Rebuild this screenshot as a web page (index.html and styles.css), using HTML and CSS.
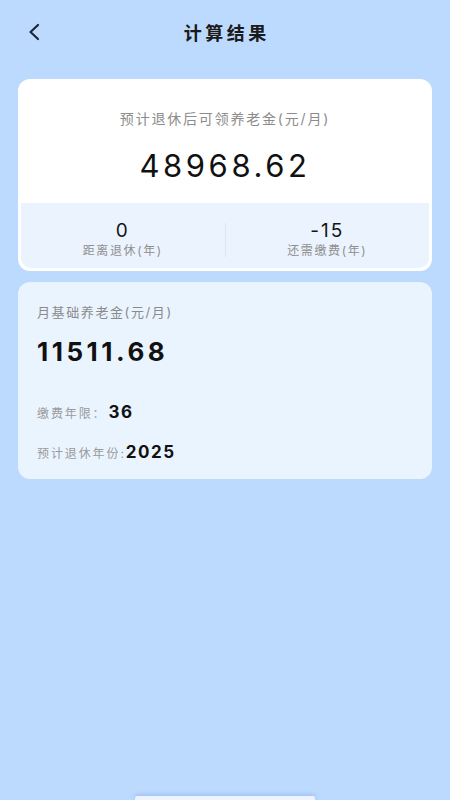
FILE: index.html
```html
<!DOCTYPE html>
<html lang="zh-CN">
<head>
    <meta charset="UTF-8">
    <meta name="viewport" content="width=device-width, initial-scale=1.0">
    <title>计算结果</title>
    <link rel="stylesheet" href="styles.css">
</head>
<body>
    <div class="page">
        <div class="header">
            <button class="back" aria-label="返回">
                <svg width="14" height="18" viewBox="0 0 14 18">
                    <polyline points="11,2 3.5,9 11,16" fill="none" stroke="#1d2633" stroke-width="2.2" stroke-linecap="round" stroke-linejoin="round"/>
                </svg>
            </button>
            <h1>计算结果</h1>
        </div>

        <div class="card total-card">
            <p class="total-label">预计退休后可领养老金(元/月)</p>
            <p class="total-value">48968.62</p>
            <div class="stats">
                <div class="stat">
                    <span class="stat-value">0</span>
                    <span class="stat-label">距离退休(年)</span>
                </div>
                <div class="stat-divider"></div>
                <div class="stat">
                    <span class="stat-value">-15</span>
                    <span class="stat-label">还需缴费(年)</span>
                </div>
            </div>
        </div>

        <div class="card base-card">
            <p class="base-label">月基础养老金(元/月)</p>
            <p class="base-value">11511.68</p>
            <div class="info-row first">
                <span class="info-label">缴费年限：</span>
                <span class="info-value years">36</span>
            </div>
            <div class="info-row">
                <span class="info-label">预计退休年份:</span>
                <span class="info-value">2025</span>
            </div>
        </div>
    </div>
    <div class="home-bar"></div>
</body>
</html>
```

FILE: styles.css
```css
* {
    margin: 0;
    padding: 0;
    box-sizing: border-box;
    font-family: 'Inter', 'Noto Sans CJK SC', sans-serif;
}

body {
    min-height: 100vh;
    background: #bcd9fe;
    color: #141414;
}

.page {
    padding: 0 18px;
}

.header {
    position: relative;
    height: 64px;
    display: flex;
    align-items: center;
    justify-content: center;
}

.back {
    position: absolute;
    left: 6px;
    top: 22px;
    width: 20px;
    height: 20px;
    border: none;
    background: none;
    display: flex;
    align-items: center;
    justify-content: center;
}

h1 {
    font-size: 18px;
    font-weight: 700;
    letter-spacing: 3.5px;
    margin-right: -3.5px;
    color: #1a1a1a;
}

.card {
    border-radius: 12px;
}

.total-card {
    margin-top: 15px;
    background: #ffffff;
    padding: 30px 3px 3px;
    text-align: center;
}

.total-label {
    font-size: 14px;
    line-height: 20px;
    letter-spacing: 1.8px;
    color: #8c8c8c;
}

.total-value {
    margin: 17px 0;
    font-size: 31px;
    line-height: 40px;
    letter-spacing: 3.6px;
    font-weight: 400;
    color: #111;
}

.stats {
    display: grid;
    grid-template-columns: 1fr 1px 1fr;
    align-items: center;
    background: #ebf3fe;
    border-radius: 0 0 10px 10px;
    padding: 17px 0 8px;
}

.stat {
    display: flex;
    flex-direction: column;
    align-items: center;
}

.stat-value {
    font-size: 19px;
    line-height: 22px;
    letter-spacing: 2px;
    color: #151515;
}

.stat-label {
    font-size: 12px;
    line-height: 18px;
    letter-spacing: 1.6px;
    color: #8f8f8f;
}

.stat-divider {
    height: 34px;
    background: #dde6f1;
}

.base-card {
    margin-top: 11px;
    background: #eaf4ff;
    padding: 20px 19px 14px;
}

.base-label {
    font-size: 13px;
    line-height: 20px;
    letter-spacing: 1.6px;
    color: #8a8a8a;
}

.base-value {
    margin-top: 13px;
    font-size: 26px;
    line-height: 34px;
    font-weight: 700;
    letter-spacing: 3.5px;
    color: #111;
}

.info-row {
    display: flex;
    align-items: baseline;
    margin-top: 16px;
    line-height: 22px;
}

.info-row.first {
    margin-top: 32px;
}

.info-label {
    font-size: 12px;
    letter-spacing: 1.9px;
    color: #9a9a9a;
}

.info-value {
    font-size: 17px;
    font-weight: 700;
    letter-spacing: 1.5px;
    color: #111;
}

.years {
    margin-left: 2px;
}

.home-bar {
    position: fixed;
    left: 135px;
    bottom: 0;
    width: 180px;
    height: 4px;
    border-radius: 2px 2px 0 0;
    background: #eef4ff;
    box-shadow: 0 -1px 4px rgba(90, 120, 190, 0.35);
}
```
